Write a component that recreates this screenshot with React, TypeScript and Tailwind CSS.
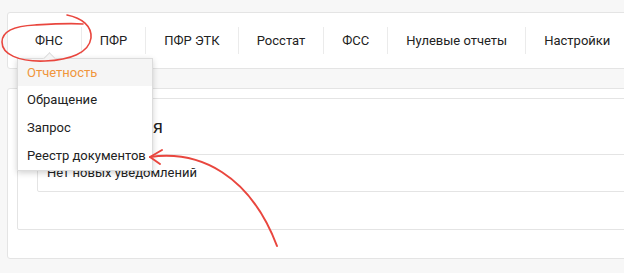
import React from "react";

const tabs = ["ФНС", "ПФР", "ПФР ЭТК", "Росстат", "ФСС", "Нулевые отчеты", "Настройки"];
const items = ["Отчетность", "Обращение", "Запрос", "Реестр документов"];

export default function App() {
  return (
    <div className="relative w-[624px] h-[273px] overflow-hidden bg-[#f7f7f7] font-['Roboto',sans-serif] text-[#333]">
      <div className="pt-[12px] pl-[7px]">
        <div className="w-[660px] h-[57px] bg-white border border-[#e4e4e4] rounded-[3px] flex items-center pl-[9px]">
          {tabs.map((t, i) => (
            <React.Fragment key={t}>
              {i > 0 && <div className="w-px h-[27px] bg-[#ebebeb]" />}
              <div className="pl-[18px] pr-[18px] text-[13px] leading-[20px] whitespace-nowrap text-[#222]">{t}</div>
            </React.Fragment>
          ))}
        </div>
        <div className="mt-[19px] w-[660px] h-[171px] bg-white border border-[#e4e4e4] rounded-[3px] pt-[9px] pl-[9px]">
          <div className="h-[132px] border border-[#e4e4e4] rounded-[2px] pl-[19px]">
            <div className="h-[55px] flex items-center pl-[10px] text-[18px] text-[#222]">Уведомления</div>
            <div className="h-[38px] border border-[#e4e4e4] rounded-[2px] flex items-center pl-[9px] text-[13px] text-[#222] whitespace-nowrap">
              Нет новых уведомлений
            </div>
          </div>
        </div>
      </div>

      <div className="absolute left-[17px] top-[58px] w-[136px] bg-white border border-[#dcdcdc] shadow-[0_2px_6px_rgba(0,0,0,0.18)]">
        <div className="absolute left-[27px] -top-[5px] w-[9px] h-[9px] rotate-45 bg-[#f5f5f5] border-l border-t border-[#dcdcdc]" />
        {items.map((it, i) => (
          <div
            key={it}
            className={
              i === 0
                ? "relative h-[27px] flex items-center pl-[9px] text-[13px] whitespace-nowrap text-[#f0963c] bg-[#f5f5f5]"
                : "relative h-[28px] flex items-center pl-[9px] text-[13px] whitespace-nowrap text-[#222]"
            }
          >
            {it}
          </div>
        ))}
      </div>

      <svg className="absolute left-0 top-0" width="624" height="273" viewBox="0 0 624 273" fill="none">
        <path
          d="M67 15 C 82 18, 92 26, 91 38 C 89 53, 70 60, 45 61 C 18 62, 2 54, 2 42 C 2 31, 15 26, 35 25 C 52 24, 68 23, 83 24"
          stroke="#e9463e"
          strokeWidth="1.6"
          strokeLinecap="round"
        />
        <path d="M150 157 C 200 150, 250 175, 277 246" stroke="#e9463e" strokeWidth="2" strokeLinecap="round" />
        <path d="M162 150 L150 157 L160 164" stroke="#e9463e" strokeWidth="2" strokeLinecap="round" strokeLinejoin="round" />
      </svg>
    </div>
  );
}
